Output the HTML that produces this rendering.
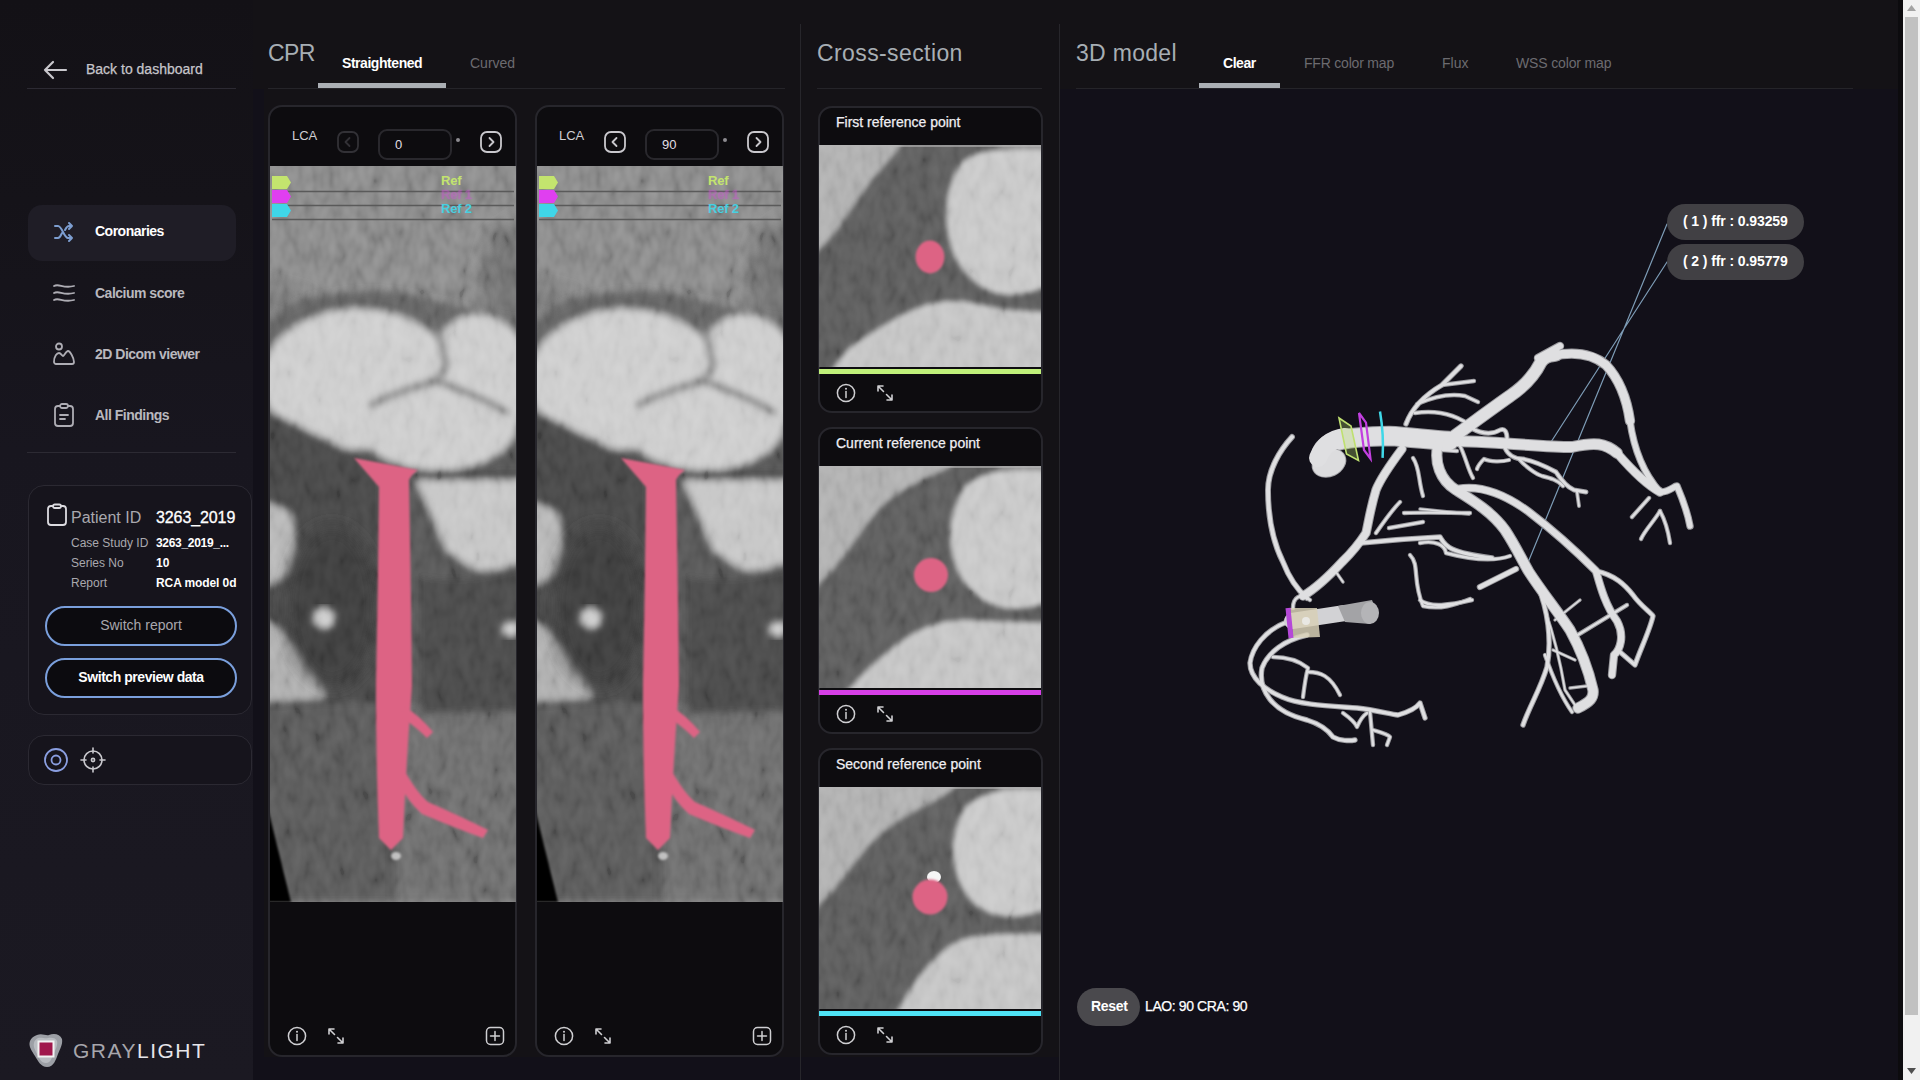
<!DOCTYPE html>
<html><head><meta charset="utf-8">
<style>
*{margin:0;padding:0;box-sizing:border-box}
html,body{width:1920px;height:1080px;overflow:hidden;background:#121019;font-family:"Liberation Sans",sans-serif;color:#fff}
.a{position:absolute}
.t{position:absolute;white-space:nowrap;line-height:1}
#side{left:0;top:0;width:253px;height:1080px;background:linear-gradient(180deg,#131116 0,#151319 200px,#18161f 450px,#1b1922 100%)}
.hl{position:absolute;height:1px;background:#2c2a33}
.navt{font-size:14px;font-weight:bold;color:#b9b8be;letter-spacing:-0.5px}
.card{position:absolute;border:1.5px solid #2b2932;border-radius:16px;background:#16141c}
.btn{position:absolute;border:2px solid #7a9fdc;border-radius:20px;background:#0c0b0f;font-size:14px;text-align:center;line-height:35px}
.title{font-size:23px;color:#a7aeb4}
.tab{font-size:14px;color:#6c6b70}
.tabon{font-size:14px;color:#fff;font-weight:bold;letter-spacing:-0.45px}
.ul{position:absolute;height:5px;background:#abafb4}
.panel{position:absolute;border:2px solid #27262c;border-radius:14px;background:#0d0c0f;overflow:hidden}
.vsep{position:absolute;width:1px;background:#27262b}
#scroll{left:1903px;top:0;width:17px;height:1080px;background:#f1f1f1}
svg{position:absolute;overflow:visible}
</style></head><body>
<div class="a" style="left:253px;top:0;width:1650px;height:89px;background:#141216"></div>
<div class="a" style="left:264px;top:0;width:796px;height:1057px;background:#141216"></div>
<div id="side" class="a"></div>

<!-- ===== SIDEBAR ===== -->
<svg style="left:42px;top:60px" width="26" height="20" viewBox="0 0 26 20"><path d="M24 10H3M11 2L3 10L11 18" fill="none" stroke="#c9c8cd" stroke-width="2.2" stroke-linecap="round" stroke-linejoin="round"/></svg>
<div class="t" style="left:86px;top:62px;font-size:14px;color:#c6c5ca;-webkit-text-stroke:0.25px #c6c5ca">Back to dashboard</div>
<div class="hl" style="left:27px;top:88px;width:209px"></div>

<div class="a" style="left:28px;top:205px;width:208px;height:56px;border-radius:14px;background:#1f1d26"></div>
<svg style="left:53px;top:222px" width="22" height="20" viewBox="0 0 22 20"><g fill="none" stroke="#7d9ed0" stroke-width="2" stroke-linecap="round" stroke-linejoin="round"><path d="M2 4h3c4 0 6 12 10 12h4M2 16h3c2 0 3-3 4-5M12 8c1-2 2-4 4-4h3M16 1l3 3-3 3M16 13l3 3-3 3"/></g></svg>
<div class="t navt" style="left:95px;top:224px;color:#fff">Coronaries</div>

<svg style="left:52px;top:282px" width="24" height="22" viewBox="0 0 24 22"><g fill="none" stroke="#aeadb4" stroke-width="1.8" stroke-linecap="round"><path d="M2 4c5-3 9 3 20 0M2 11c5-3 9 3 20 0M2 18c5-3 9 3 20 0"/></g></svg>
<div class="t navt" style="left:95px;top:286px">Calcium score</div>

<svg style="left:52px;top:342px" width="24" height="24" viewBox="0 0 24 24"><g fill="none" stroke="#aeadb4" stroke-width="1.8" stroke-linejoin="round"><circle cx="7" cy="4.5" r="3"/><path d="M2 20c0-6 3-9 5-9s3 3 4 3 3-5 5-5 6 7 6 11c0 1-1 2-2 2H4c-1 0-2-1-2-2z"/></g></svg>
<div class="t navt" style="left:95px;top:347px">2D Dicom viewer</div>

<svg style="left:53px;top:403px" width="22" height="24" viewBox="0 0 22 24"><g fill="none" stroke="#aeadb4" stroke-width="1.8" stroke-linecap="round" stroke-linejoin="round"><path d="M7 3H5C3 3 2 4 2 6v14c0 2 1 3 3 3h12c2 0 3-1 3-3V6c0-2-1-3-3-3h-2"/><rect x="7" y="1" width="8" height="4" rx="2"/><path d="M7 12h8M7 16h5"/></g></svg>
<div class="t navt" style="left:95px;top:408px">All Findings</div>
<div class="hl" style="left:27px;top:452px;width:209px"></div>

<!-- patient card -->
<div class="card" style="left:28px;top:485px;width:224px;height:230px"></div>
<svg style="left:46px;top:503px" width="22" height="24" viewBox="0 0 22 24"><g fill="none" stroke="#dcdbe0" stroke-width="1.8" stroke-linejoin="round"><path d="M7 3H5C3 3 2 4 2 6v13c0 2 1 3 3 3h12c2 0 3-1 3-3V6c0-2-1-3-3-3h-2"/><rect x="7" y="1.5" width="8" height="3.5" rx="1.7"/></g></svg>
<div class="t" style="left:71px;top:510px;font-size:16px;color:#a9a8ae">Patient ID</div>
<div class="t" style="left:156px;top:510px;font-size:16px;color:#fff;letter-spacing:-0.1px;-webkit-text-stroke:0.3px #fff">3263_2019</div>
<div class="t" style="left:71px;top:537px;font-size:12px;color:#a9a8ae">Case Study ID</div>
<div class="t" style="left:156px;top:537px;font-size:12px;color:#fff;font-weight:bold;letter-spacing:-0.3px">3263_2019_...</div>
<div class="t" style="left:71px;top:557px;font-size:12px;color:#a9a8ae">Series No</div>
<div class="t" style="left:156px;top:557px;font-size:12px;color:#fff;font-weight:bold">10</div>
<div class="t" style="left:71px;top:577px;font-size:12px;color:#a9a8ae">Report</div>
<div class="t" style="left:156px;top:577px;font-size:12px;color:#fff;font-weight:bold;letter-spacing:-0.1px">RCA model 0d</div>
<div class="btn" style="left:45px;top:606px;width:192px;height:40px;color:#a8a7ad">Switch report</div>
<div class="btn" style="left:45px;top:658px;width:192px;height:40px;color:#fff;font-weight:bold;letter-spacing:-0.45px">Switch preview data</div>

<!-- tools card -->
<div class="card" style="left:28px;top:735px;width:224px;height:50px"></div>
<svg style="left:43px;top:747px" width="26" height="26" viewBox="0 0 26 26"><g fill="none" stroke="#8a9ee0" stroke-width="1.8"><circle cx="13" cy="13" r="11"/><circle cx="13" cy="13" r="4.5"/></g></svg>
<svg style="left:80px;top:747px" width="26" height="26" viewBox="0 0 26 26"><g fill="none" stroke="#c9c8cd" stroke-width="1.6" stroke-linecap="round"><circle cx="13" cy="13" r="9"/><circle cx="13" cy="13" r="1.6"/><path d="M13 1v5M13 20v5M1 13h5M20 13h5"/></g></svg>

<!-- logo -->
<svg style="left:29px;top:1033px" width="34" height="35" viewBox="0 0 34 35"><path d="M8 2c5-2 9 1 12 0 5-2 11-1 13 4 1 5-2 10-4 15-2 5-4 13-11 13-6 0-9-6-12-11C3 18-1 13 1 8c1-3 4-5 7-6z" fill="#9c9fa5"/><path d="M9 5c4-1 7 1 10 0 4-1 8 0 9 3s-1 8-3 12-3 10-8 10-7-5-9-9C6 17 4 13 5 10c0-2 2-4 4-5z" fill="#b9bcc1"/><rect x="8.5" y="7.5" width="17" height="17" fill="#f2f2f2"/><rect x="10.5" y="9.5" width="13" height="13" fill="#a0184c"/></svg>
<div class="t" style="left:73px;top:1040px;font-size:21px;color:#a7a6ac;letter-spacing:1.5px;font-weight:normal">GRAY<span style="color:#e6e5ea">LIGHT</span></div>

<!-- ===== MAIN SEPARATORS ===== -->
<div class="vsep" style="left:800px;top:24px;height:1056px"></div>
<div class="vsep" style="left:1059px;top:24px;height:1056px"></div>

<!-- CPR header -->
<div class="t title" style="left:268px;top:42px;letter-spacing:-0.6px">CPR</div>
<div class="t tabon" style="left:342px;top:56px">Straightened</div>
<div class="t tab" style="left:470px;top:56px">Curved</div>
<div class="hl" style="left:268px;top:88px;width:517px;background:#252429"></div>
<div class="ul" style="left:318px;top:83px;width:128px"></div>

<!-- Cross-section header -->
<div class="t title" style="left:817px;top:42px;letter-spacing:0.4px">Cross-section</div>
<div class="hl" style="left:817px;top:88px;width:225px;background:#252429"></div>

<!-- 3D header -->
<div class="t title" style="left:1076px;top:42px;letter-spacing:0.3px">3D model</div>
<div class="t tabon" style="left:1223px;top:56px">Clear</div>
<div class="t tab" style="left:1304px;top:56px;letter-spacing:-0.2px">FFR color map</div>
<div class="t tab" style="left:1442px;top:56px">Flux</div>
<div class="t tab" style="left:1516px;top:56px;letter-spacing:-0.15px">WSS color map</div>
<div class="hl" style="left:1076px;top:88px;width:777px;background:#252429"></div>
<div class="ul" style="left:1199px;top:83px;width:81px"></div>

<!-- PANELS placeholder -->
<svg width="0" height="0" style="position:absolute"><defs><filter id="ctnoise" x="0" y="0" width="100%" height="100%" filterUnits="objectBoundingBox"><feTurbulence type="fractalNoise" baseFrequency="0.09 0.05" numOctaves="2" seed="7" result="n"/><feColorMatrix type="matrix" values="1.6 0 0 0 -0.3  1.6 0 0 0 -0.3  1.6 0 0 0 -0.3  0 0 0 0 1" /></filter></defs></svg><div class="panel" style="left:268px;top:105px;width:249px;height:952px"></div><div class="t" style="left:292px;top:129px;font-size:13px;color:#cfced3">LCA</div><svg style="left:337px;top:131px" width="22" height="22" viewBox="0 0 22 22"><rect x="1" y="1" width="20" height="20" rx="6" fill="none" stroke="#323136" stroke-width="1.8"/><path d="M12.5 7l-4 4 4 4" fill="none" stroke="#323136" stroke-width="1.8" stroke-linecap="round" stroke-linejoin="round"/></svg><div class="a" style="left:378px;top:129px;width:74px;height:31px;border:2px solid #29282d;border-radius:9px"></div><div class="t" style="left:395px;top:138px;font-size:13px;color:#e0dfe4">0</div><div class="a" style="left:456px;top:138px;width:4px;height:4px;border-radius:2px;background:#8d8c91"></div><svg style="left:480px;top:131px" width="22" height="22" viewBox="0 0 22 22"><rect x="1" y="1" width="20" height="20" rx="6" fill="none" stroke="#c9c8cd" stroke-width="1.8"/><path d="M9.5 7l4 4-4 4" fill="none" stroke="#c9c8cd" stroke-width="1.8" stroke-linecap="round" stroke-linejoin="round"/></svg><svg style="left:270px;top:166px" width="246" height="736" viewBox="0 0 246 736">
<defs><filter id="blc0" x="-10%" y="-10%" width="120%" height="120%"><feGaussianBlur stdDeviation="3.5"/></filter>
<filter id="bmc0" x="-30%" y="-30%" width="160%" height="160%"><feGaussianBlur stdDeviation="8"/></filter>
<filter id="bsc0" x="-20%" y="-20%" width="140%" height="140%"><feGaussianBlur stdDeviation="0.8"/></filter>
<clipPath id="cpc0"><rect width="246" height="736"/></clipPath></defs>
<g clip-path="url(#cpc0)">
<rect width="246" height="736" fill="#858585"/>
<g filter="url(#bmc0)">
<path d="M222 70 L270 40 L270 170 L210 160 Q205 120 222 70z" fill="#6e6e6e"/>
<path d="M-20 115 L40 130 L30 175 L-20 190z" fill="#737373"/>
</g>
<g filter="url(#blc0)">
<path d="M-10 165 Q15 138 46 131 Q80 124 106 125 Q135 126 155 133 Q190 140 215 148 Q235 152 260 156 L260 175 L-10 200z" fill="#5e5e5e" />
<path d="M-10 240 L150 240 L150 736 L-10 736z" fill="#525252"/>
<path d="M140 270 L260 250 L260 736 L140 736z" fill="#555555"/>
<ellipse cx="88" cy="213" rx="96" ry="70" fill="#cccccc"/>
<ellipse cx="208" cy="215" rx="52" ry="67" fill="#cbcbcb"/>
<ellipse cx="168" cy="260" rx="78" ry="44" fill="#cbcbcb"/>
<path d="M157 138 Q172 170 176 198 Q172 208 166 215 M166 215 Q130 224 99 240 M166 215 Q205 228 239 247" fill="none" stroke="#6a6a6a" stroke-width="6"/>
<path d="M-10 300 Q50 306 100 318 L100 330 Q50 322 -10 324z" fill="#3a3a3a"/>
<path d="M148 305 L260 306 L260 314 L150 314z" fill="#444"/>
<path d="M146 314 L260 314 L260 392 Q230 406 205 404 Q185 390 176 383 Q160 345 146 314z" fill="#c4c4c4"/>
<path d="M-10 240 L110 300 L110 545 L-10 545z" fill="#474747"/>
<path d="M-10 336 Q10 338 22 350 Q28 380 20 405 Q10 418 -10 420z" fill="#b4b4b4"/>
<path d="M-10 452 Q15 462 35 490 Q52 515 55 532 L-10 536z" fill="#ababab"/>
<path d="M125 540 L260 525 L260 736 L125 736z" fill="#6a6a6a"/>
<path d="M-10 540 L118 535 L118 736 L-10 736z" fill="#585858"/>
<path d="M150 410 Q200 420 260 400 L260 545 L150 548z" fill="#4a4a4a"/>
</g>
<g filter="url(#bmc0)">
<ellipse cx="62" cy="440" rx="46" ry="80" fill="#3d3d3d"/>
</g>
<g filter="url(#blc0)">
<circle cx="54" cy="452" r="11" fill="#d0d0d0"/>
<ellipse cx="241" cy="463" rx="9" ry="8" fill="#cdcdcd"/>
</g>
<rect width="246" height="736" filter="url(#ctnoise)" opacity=".16" style="mix-blend-mode:overlay"/>
<g stroke="#5a5a5a" stroke-width="1.3" fill="none"><path d="M2 25.5H244M2 39.5H244M2 53.5H244"/></g>
<path d="M-2 643 L21 736 L-2 736z" fill="#050505" filter="url(#bsc0)"/>
<g fill="#dd6384" filter="url(#bsc0)">
<path d="M84 292 L148 304 Q142 308 139 314 Q141 420 142 520 Q136 600 133 672 L121 684 L109 672 Q106 600 106 520 Q108 420 109 321z"/>
<path d="M134 540 Q150 550 163 566 L157 572 Q145 560 131 551z"/>
<path d="M131 598 Q145 625 158 636 Q190 650 218 664 L213 672 Q185 662 152 648 Q137 635 126 612z"/>
</g>
<ellipse cx="126" cy="690" rx="5" ry="4" fill="#e8e8e8" opacity=".7" filter="url(#bsc0)"/>
</g></svg><svg style="left:272px;top:176px" width="20" height="13" viewBox="0 0 20 13"><path d="M0 0H15L19 6.5L15 13H0z" fill="#c3e46e"/></svg><svg style="left:272px;top:190px" width="20" height="13" viewBox="0 0 20 13"><path d="M0 0H15L19 6.5L15 13H0z" fill="#e03ff0"/></svg><svg style="left:272px;top:204px" width="20" height="13" viewBox="0 0 20 13"><path d="M0 0H15L19 6.5L15 13H0z" fill="#3fd6e8"/></svg><div class="t" style="left:441px;top:174px;font-size:13px;font-weight:bold;letter-spacing:-0.2px;color:#c3e46e">Ref</div><div class="t" style="left:441px;top:188px;font-size:13px;font-weight:bold;letter-spacing:-0.2px;color:#cf52d6;opacity:.45;text-shadow:0 0 2px #d040e0">Ref 1</div><div class="t" style="left:441px;top:202px;font-size:13px;font-weight:bold;letter-spacing:-0.2px;color:#48cfe0">Ref 2</div><svg style="left:287px;top:1026px" width="20" height="20" viewBox="0 0 20 20"><g fill="none" stroke="#cfcfd2" stroke-width="1.5" stroke-linecap="round"><circle cx="10" cy="10" r="8.6"/><path d="M10 8.5v6"/></g><circle cx="10" cy="5.8" r="1" fill="#cfcfd2"/></svg><svg style="left:327px;top:1027px" width="18" height="18" viewBox="0 0 18 18"><g fill="none" stroke="#cfcfd2" stroke-width="1.6" stroke-linecap="round" stroke-linejoin="round"><path d="M2 2l5.5 5.5M2 7V2h5M16 16l-5.5-5.5M16 11v5h-5"/></g></svg><svg style="left:485px;top:1026px" width="20" height="20" viewBox="0 0 20 20"><g fill="none" stroke="#cfcfd2" stroke-width="1.5" stroke-linecap="round"><rect x="1.5" y="1.5" width="17" height="17" rx="4"/><path d="M10 5.5v9M5.5 10h9"/></g></svg><div class="panel" style="left:535px;top:105px;width:249px;height:952px"></div><div class="t" style="left:559px;top:129px;font-size:13px;color:#cfced3">LCA</div><svg style="left:604px;top:131px" width="22" height="22" viewBox="0 0 22 22"><rect x="1" y="1" width="20" height="20" rx="6" fill="none" stroke="#c9c8cd" stroke-width="1.8"/><path d="M12.5 7l-4 4 4 4" fill="none" stroke="#c9c8cd" stroke-width="1.8" stroke-linecap="round" stroke-linejoin="round"/></svg><div class="a" style="left:645px;top:129px;width:74px;height:31px;border:2px solid #29282d;border-radius:9px"></div><div class="t" style="left:662px;top:138px;font-size:13px;color:#e0dfe4">90</div><div class="a" style="left:723px;top:138px;width:4px;height:4px;border-radius:2px;background:#8d8c91"></div><svg style="left:747px;top:131px" width="22" height="22" viewBox="0 0 22 22"><rect x="1" y="1" width="20" height="20" rx="6" fill="none" stroke="#c9c8cd" stroke-width="1.8"/><path d="M9.5 7l4 4-4 4" fill="none" stroke="#c9c8cd" stroke-width="1.8" stroke-linecap="round" stroke-linejoin="round"/></svg><svg style="left:537px;top:166px" width="246" height="736" viewBox="0 0 246 736">
<defs><filter id="blc267" x="-10%" y="-10%" width="120%" height="120%"><feGaussianBlur stdDeviation="3.5"/></filter>
<filter id="bmc267" x="-30%" y="-30%" width="160%" height="160%"><feGaussianBlur stdDeviation="8"/></filter>
<filter id="bsc267" x="-20%" y="-20%" width="140%" height="140%"><feGaussianBlur stdDeviation="0.8"/></filter>
<clipPath id="cpc267"><rect width="246" height="736"/></clipPath></defs>
<g clip-path="url(#cpc267)">
<rect width="246" height="736" fill="#858585"/>
<g filter="url(#bmc267)">
<path d="M222 70 L270 40 L270 170 L210 160 Q205 120 222 70z" fill="#6e6e6e"/>
<path d="M-20 115 L40 130 L30 175 L-20 190z" fill="#737373"/>
</g>
<g filter="url(#blc267)">
<path d="M-10 165 Q15 138 46 131 Q80 124 106 125 Q135 126 155 133 Q190 140 215 148 Q235 152 260 156 L260 175 L-10 200z" fill="#5e5e5e" />
<path d="M-10 240 L150 240 L150 736 L-10 736z" fill="#525252"/>
<path d="M140 270 L260 250 L260 736 L140 736z" fill="#555555"/>
<ellipse cx="88" cy="213" rx="96" ry="70" fill="#cccccc"/>
<ellipse cx="208" cy="215" rx="52" ry="67" fill="#cbcbcb"/>
<ellipse cx="168" cy="260" rx="78" ry="44" fill="#cbcbcb"/>
<path d="M157 138 Q172 170 176 198 Q172 208 166 215 M166 215 Q130 224 99 240 M166 215 Q205 228 239 247" fill="none" stroke="#6a6a6a" stroke-width="6"/>
<path d="M-10 300 Q50 306 100 318 L100 330 Q50 322 -10 324z" fill="#3a3a3a"/>
<path d="M148 305 L260 306 L260 314 L150 314z" fill="#444"/>
<path d="M146 314 L260 314 L260 392 Q230 406 205 404 Q185 390 176 383 Q160 345 146 314z" fill="#c4c4c4"/>
<path d="M-10 240 L110 300 L110 545 L-10 545z" fill="#474747"/>
<path d="M-10 336 Q10 338 22 350 Q28 380 20 405 Q10 418 -10 420z" fill="#b4b4b4"/>
<path d="M-10 452 Q15 462 35 490 Q52 515 55 532 L-10 536z" fill="#ababab"/>
<path d="M125 540 L260 525 L260 736 L125 736z" fill="#6a6a6a"/>
<path d="M-10 540 L118 535 L118 736 L-10 736z" fill="#585858"/>
<path d="M150 410 Q200 420 260 400 L260 545 L150 548z" fill="#4a4a4a"/>
</g>
<g filter="url(#bmc267)">
<ellipse cx="62" cy="440" rx="46" ry="80" fill="#3d3d3d"/>
</g>
<g filter="url(#blc267)">
<circle cx="54" cy="452" r="11" fill="#d0d0d0"/>
<ellipse cx="241" cy="463" rx="9" ry="8" fill="#cdcdcd"/>
</g>
<rect width="246" height="736" filter="url(#ctnoise)" opacity=".16" style="mix-blend-mode:overlay"/>
<g stroke="#5a5a5a" stroke-width="1.3" fill="none"><path d="M2 25.5H244M2 39.5H244M2 53.5H244"/></g>
<path d="M-2 643 L21 736 L-2 736z" fill="#050505" filter="url(#bsc267)"/>
<g fill="#dd6384" filter="url(#bsc267)">
<path d="M84 292 L148 304 Q142 308 139 314 Q141 420 142 520 Q136 600 133 672 L121 684 L109 672 Q106 600 106 520 Q108 420 109 321z"/>
<path d="M134 540 Q150 550 163 566 L157 572 Q145 560 131 551z"/>
<path d="M131 598 Q145 625 158 636 Q190 650 218 664 L213 672 Q185 662 152 648 Q137 635 126 612z"/>
</g>
<ellipse cx="126" cy="690" rx="5" ry="4" fill="#e8e8e8" opacity=".7" filter="url(#bsc267)"/>
</g></svg><svg style="left:539px;top:176px" width="20" height="13" viewBox="0 0 20 13"><path d="M0 0H15L19 6.5L15 13H0z" fill="#c3e46e"/></svg><svg style="left:539px;top:190px" width="20" height="13" viewBox="0 0 20 13"><path d="M0 0H15L19 6.5L15 13H0z" fill="#e03ff0"/></svg><svg style="left:539px;top:204px" width="20" height="13" viewBox="0 0 20 13"><path d="M0 0H15L19 6.5L15 13H0z" fill="#3fd6e8"/></svg><div class="t" style="left:708px;top:174px;font-size:13px;font-weight:bold;letter-spacing:-0.2px;color:#c3e46e">Ref</div><div class="t" style="left:708px;top:188px;font-size:13px;font-weight:bold;letter-spacing:-0.2px;color:#cf52d6;opacity:.45;text-shadow:0 0 2px #d040e0">Ref 1</div><div class="t" style="left:708px;top:202px;font-size:13px;font-weight:bold;letter-spacing:-0.2px;color:#48cfe0">Ref 2</div><svg style="left:554px;top:1026px" width="20" height="20" viewBox="0 0 20 20"><g fill="none" stroke="#cfcfd2" stroke-width="1.5" stroke-linecap="round"><circle cx="10" cy="10" r="8.6"/><path d="M10 8.5v6"/></g><circle cx="10" cy="5.8" r="1" fill="#cfcfd2"/></svg><svg style="left:594px;top:1027px" width="18" height="18" viewBox="0 0 18 18"><g fill="none" stroke="#cfcfd2" stroke-width="1.6" stroke-linecap="round" stroke-linejoin="round"><path d="M2 2l5.5 5.5M2 7V2h5M16 16l-5.5-5.5M16 11v5h-5"/></g></svg><svg style="left:752px;top:1026px" width="20" height="20" viewBox="0 0 20 20"><g fill="none" stroke="#cfcfd2" stroke-width="1.5" stroke-linecap="round"><rect x="1.5" y="1.5" width="17" height="17" rx="4"/><path d="M10 5.5v9M5.5 10h9"/></g></svg>
<!--CPR2-->
<div class="panel" style="left:818px;top:106px;width:225px;height:307px;border-radius:14px"></div><div class="t" style="left:836px;top:115px;font-size:14px;color:#f0eff3;-webkit-text-stroke:0.25px #f0eff3">First reference point</div><svg style="left:819px;top:145px" width="222" height="222" viewBox="0 0 222 222">
<defs><filter id="xbx0" x="-10%" y="-10%" width="120%" height="120%"><feGaussianBlur stdDeviation="2.8"/></filter>
<filter id="xsx0"><feGaussianBlur stdDeviation="0.8"/></filter><clipPath id="xcx0"><rect width="222" height="222"/></clipPath></defs>
<g clip-path="url(#xcx0)">
<rect width="222" height="222" fill="#5a5a5a"/>
<g filter="url(#xbx0)">
<path d="M150 -10 L232 -10 L232 40 Q200 0 150 -10z" fill="#8a8a8a"/>
<path d="M-8 -8 L88 -8 Q75 10 62 25 Q50 38 41 51 Q30 68 20 82 Q10 96 -8 112z" fill="#acacac"/>
<path d="M232 5 L178 5 Q155 6 142 18 Q127 40 127 70 C127 110 150 148 190 150 C205 150 222 145 232 140z" fill="#c6c6c6"/>
<path d="M8 232 Q25 205 41 195 Q60 182 82 170 Q98 162 113 158 Q130 155 144 156 Q165 160 185 164 Q205 166 232 167 L232 232z" fill="#c2c2c2"/>
</g>
<rect width="222" height="222" filter="url(#ctnoise)" opacity=".16" style="mix-blend-mode:overlay"/>
<rect x="0" y="0" width="222" height="2" fill="#b5b5b5" opacity=".6"/>

<ellipse cx="111" cy="112" rx="14.4" ry="16.4" fill="#dd6384" filter="url(#xsx0)"/>
</g></svg><div class="a" style="left:819px;top:369px;width:222px;height:5px;background:#c0f07a"></div><svg style="left:836px;top:383px" width="20" height="20" viewBox="0 0 20 20"><g fill="none" stroke="#cfcfd2" stroke-width="1.5" stroke-linecap="round"><circle cx="10" cy="10" r="8.6"/><path d="M10 8.5v6"/></g><circle cx="10" cy="5.8" r="1" fill="#cfcfd2"/></svg><svg style="left:876px;top:384px" width="18" height="18" viewBox="0 0 18 18"><g fill="none" stroke="#cfcfd2" stroke-width="1.6" stroke-linecap="round" stroke-linejoin="round"><path d="M2 2l5.5 5.5M2 7V2h5M16 16l-5.5-5.5M16 11v5h-5"/></g></svg><div class="panel" style="left:818px;top:427px;width:225px;height:307px;border-radius:14px"></div><div class="t" style="left:836px;top:436px;font-size:14px;color:#f0eff3;-webkit-text-stroke:0.25px #f0eff3">Current reference point</div><svg style="left:819px;top:466px" width="222" height="222" viewBox="0 0 222 222">
<defs><filter id="xbx1" x="-10%" y="-10%" width="120%" height="120%"><feGaussianBlur stdDeviation="2.8"/></filter>
<filter id="xsx1"><feGaussianBlur stdDeviation="0.8"/></filter><clipPath id="xcx1"><rect width="222" height="222"/></clipPath></defs>
<g clip-path="url(#xcx1)">
<rect width="222" height="222" fill="#5a5a5a"/>
<g filter="url(#xbx1)">
<path d="M150 -10 L232 -10 L232 40 Q200 0 150 -10z" fill="#8a8a8a"/>
<path d="M-8 -8 L145 -8 Q125 5 103 14 Q80 25 62 41 Q45 60 31 82 Q15 105 -8 126z" fill="#acacac"/>
<path d="M232 5 L180 5 Q160 8 146 20 Q131 42 131 70 C131 110 158 142 195 143 C210 143 225 138 232 134z" fill="#c6c6c6"/>
<path d="M22 232 Q40 210 62 191 Q78 178 92 168 Q108 160 123 156 Q140 153 154 154 Q190 156 232 156 L232 232z" fill="#c2c2c2"/>
</g>
<rect width="222" height="222" filter="url(#ctnoise)" opacity=".16" style="mix-blend-mode:overlay"/>
<rect x="0" y="0" width="222" height="2" fill="#b5b5b5" opacity=".6"/>

<ellipse cx="112" cy="109" rx="17" ry="17" fill="#dd6384" filter="url(#xsx1)"/>
</g></svg><div class="a" style="left:819px;top:690px;width:222px;height:5px;background:#d63fe6"></div><svg style="left:836px;top:704px" width="20" height="20" viewBox="0 0 20 20"><g fill="none" stroke="#cfcfd2" stroke-width="1.5" stroke-linecap="round"><circle cx="10" cy="10" r="8.6"/><path d="M10 8.5v6"/></g><circle cx="10" cy="5.8" r="1" fill="#cfcfd2"/></svg><svg style="left:876px;top:705px" width="18" height="18" viewBox="0 0 18 18"><g fill="none" stroke="#cfcfd2" stroke-width="1.6" stroke-linecap="round" stroke-linejoin="round"><path d="M2 2l5.5 5.5M2 7V2h5M16 16l-5.5-5.5M16 11v5h-5"/></g></svg><div class="panel" style="left:818px;top:748px;width:225px;height:307px;border-radius:14px"></div><div class="t" style="left:836px;top:757px;font-size:14px;color:#f0eff3;-webkit-text-stroke:0.25px #f0eff3">Second reference point</div><svg style="left:819px;top:787px" width="222" height="222" viewBox="0 0 222 222">
<defs><filter id="xbx2" x="-10%" y="-10%" width="120%" height="120%"><feGaussianBlur stdDeviation="2.8"/></filter>
<filter id="xsx2"><feGaussianBlur stdDeviation="0.8"/></filter><clipPath id="xcx2"><rect width="222" height="222"/></clipPath></defs>
<g clip-path="url(#xcx2)">
<rect width="222" height="222" fill="#5a5a5a"/>
<g filter="url(#xbx2)">
<path d="M150 -10 L232 -10 L232 40 Q200 0 150 -10z" fill="#8a8a8a"/>
<path d="M-8 -8 L147 -8 Q125 10 103 21 Q80 32 62 47 Q45 62 31 82 Q15 105 -8 126z" fill="#acacac"/>
<path d="M232 3 L185 3 Q163 6 148 18 Q134 36 134 62 C134 100 155 128 188 130 C205 130 222 125 232 120z" fill="#c6c6c6"/>
<path d="M74 232 Q88 205 103 185 Q118 168 134 156 Q148 150 164 148 Q190 146 232 146 L232 232z" fill="#c2c2c2"/>
</g>
<rect width="222" height="222" filter="url(#ctnoise)" opacity=".16" style="mix-blend-mode:overlay"/>
<rect x="0" y="0" width="222" height="2" fill="#b5b5b5" opacity=".6"/>
<ellipse cx="115" cy="90" rx="7" ry="6" fill="#f6f6f6" filter="url(#xs{uid})"/>
<ellipse cx="111" cy="110" rx="17.5" ry="17.5" fill="#dd6384" filter="url(#xsx2)"/>
</g></svg><div class="a" style="left:819px;top:1011px;width:222px;height:5px;background:#4fe3f5"></div><svg style="left:836px;top:1025px" width="20" height="20" viewBox="0 0 20 20"><g fill="none" stroke="#cfcfd2" stroke-width="1.5" stroke-linecap="round"><circle cx="10" cy="10" r="8.6"/><path d="M10 8.5v6"/></g><circle cx="10" cy="5.8" r="1" fill="#cfcfd2"/></svg><svg style="left:876px;top:1026px" width="18" height="18" viewBox="0 0 18 18"><g fill="none" stroke="#cfcfd2" stroke-width="1.6" stroke-linecap="round" stroke-linejoin="round"><path d="M2 2l5.5 5.5M2 7V2h5M16 16l-5.5-5.5M16 11v5h-5"/></g></svg>
<svg style="left:0;top:0" width="1920" height="1080" viewBox="0 0 1920 1080"><g fill="none" stroke-linecap="round" stroke-linejoin="round"><path d="M1667 224 L1527 565 M1667 262 L1551 442" stroke="#7d9cb6" stroke-width="1.2"/><path d="M1322 452 C1328 440 1345 437 1389 436 C1410 437 1430 440 1449 441" stroke="#9c9ca0" stroke-width="20.40"/><path d="M1449 440 C1470 425 1490 410 1510 396 C1528 384 1536 372 1541 362 C1545 356 1550 356 1556 355" stroke="#9c9ca0" stroke-width="13.40"/><path d="M1552 356 C1570 352 1590 352 1606 365 C1620 380 1627 400 1630 421" stroke="#9c9ca0" stroke-width="10.40"/><path d="M1630 421 C1634 450 1645 475 1660 492 C1668 493 1676 485 1677 486 C1683 500 1688 515 1690 526" stroke="#9c9ca0" stroke-width="7.40"/><path d="M1538 358 L1560 346" stroke="#9c9ca0" stroke-width="8.40"/><path d="M1449 441 C1490 441 1540 447 1572 447 C1595 442 1605 443 1617 453" stroke="#9c9ca0" stroke-width="11.90"/><path d="M1617 453 C1630 468 1645 484 1660 492" stroke="#9c9ca0" stroke-width="9.40"/><path d="M1438 445 C1434 462 1440 480 1456 490 C1472 500 1492 512 1505 530 C1515 545 1522 560 1529 572 C1542 592 1558 612 1570 630 C1580 648 1588 668 1593 690 C1594 698 1590 702 1578 708" stroke="#9c9ca0" stroke-width="11.40"/><path d="M1545 610 C1552 630 1560 660 1565 690 L1575 705" stroke="#9c9ca0" stroke-width="3.40"/><path d="M1553 650 L1575 660" stroke="#9c9ca0" stroke-width="3.40"/><path d="M1570 688 L1587 686" stroke="#9c9ca0" stroke-width="3.40"/><path d="M1458 489 C1485 484 1510 498 1529 512 C1550 528 1575 550 1596 571 C1600 585 1605 605 1617 621 C1625 636 1620 650 1614 655 L1612 675" stroke="#9c9ca0" stroke-width="8.40"/><path d="M1596 571 C1615 575 1625 585 1633 595 C1640 605 1650 612 1653 616 C1650 630 1640 650 1635 665 L1620 652" stroke="#9c9ca0" stroke-width="5.40"/><path d="M1537 584 C1548 610 1552 640 1547 667 C1540 690 1530 705 1523 725" stroke="#9c9ca0" stroke-width="5.40"/><path d="M1576 636 L1627 605" stroke="#9c9ca0" stroke-width="4.40"/><path d="M1545 655 C1552 675 1560 695 1572 712" stroke="#9c9ca0" stroke-width="4.40"/><path d="M1555 620 L1580 600" stroke="#9c9ca0" stroke-width="3.40"/><path d="M1649 498 L1632 517" stroke="#9c9ca0" stroke-width="4.40"/><path d="M1660 511 C1655 520 1645 530 1641 539" stroke="#9c9ca0" stroke-width="4.40"/><path d="M1660 511 C1665 520 1668 530 1670 543" stroke="#9c9ca0" stroke-width="4.40"/><path d="M1402 449 C1390 465 1380 480 1376 490 C1370 510 1368 525 1366 533 C1355 550 1344 560 1342 562 C1330 575 1318 587 1303 596" stroke="#9c9ca0" stroke-width="9.40"/><path d="M1361 543 C1390 540 1420 538 1440 537 C1445 545 1446 552 1492 558" stroke="#9c9ca0" stroke-width="5.40"/><path d="M1410 555 C1420 565 1412 580 1423 606 C1440 610 1455 605 1470 599" stroke="#9c9ca0" stroke-width="4.40"/><path d="M1376 533 C1385 520 1392 510 1400 502" stroke="#9c9ca0" stroke-width="4.40"/><path d="M1389 528 L1423 522" stroke="#9c9ca0" stroke-width="4.40"/><path d="M1404 513 C1430 512 1450 513 1470 513" stroke="#9c9ca0" stroke-width="4.40"/><path d="M1336 572 L1343 582" stroke="#9c9ca0" stroke-width="3.40"/><path d="M1406 424 C1413 405 1430 392 1442 385 L1461 366" stroke="#9c9ca0" stroke-width="5.40"/><path d="M1442 385 L1474 381" stroke="#9c9ca0" stroke-width="4.40"/><path d="M1417 404 C1435 396 1450 393 1465 396 L1478 402" stroke="#9c9ca0" stroke-width="4.40"/><path d="M1415 413 C1435 410 1455 413 1474 428" stroke="#9c9ca0" stroke-width="4.40"/><path d="M1471 428 C1480 433 1490 436 1500 430 C1505 428 1507 432 1507 439" stroke="#9c9ca0" stroke-width="4.90"/><path d="M1505 448 C1508 455 1515 459 1523 459 C1535 461 1545 466 1556 472 C1560 478 1565 486 1574 490 L1586 492" stroke="#9c9ca0" stroke-width="4.90"/><path d="M1519 459 C1524 465 1535 474 1542 476 C1550 478 1558 480 1563 486" stroke="#9c9ca0" stroke-width="4.40"/><path d="M1577 492 L1579 506" stroke="#9c9ca0" stroke-width="3.90"/><path d="M1509 460 C1502 462 1490 462 1484 459 C1480 463 1478 466 1477 469" stroke="#9c9ca0" stroke-width="4.40"/><path d="M1443 450 L1457 451" stroke="#9c9ca0" stroke-width="4.40"/><path d="M1460 446 C1465 455 1468 470 1473 478" stroke="#9c9ca0" stroke-width="4.40"/><path d="M1413 458 C1420 468 1418 480 1423 496" stroke="#9c9ca0" stroke-width="4.40"/><path d="M1420 509 L1469 514" stroke="#9c9ca0" stroke-width="3.40"/><path d="M1420 543 C1435 540 1445 545 1446 553 C1465 558 1490 563 1510 556" stroke="#9c9ca0" stroke-width="4.40"/><path d="M1480 587 L1516 569" stroke="#9c9ca0" stroke-width="6.40"/><path d="M1420 600 C1430 608 1450 605 1472 600" stroke="#9c9ca0" stroke-width="4.40"/><path d="M1292 437 C1280 450 1268 470 1268 490 C1268 515 1272 540 1283 562 C1290 580 1300 592 1307 598" stroke="#9c9ca0" stroke-width="5.90"/><path d="M1293 608 C1293 598 1300 592 1310 600" stroke="#9c9ca0" stroke-width="4.40"/><path d="M1287 622 C1265 630 1252 648 1250 663 C1250 678 1265 690 1282 697 C1300 705 1330 706 1357 708 C1375 710 1390 714 1398 715 C1405 713 1415 710 1420 703 L1425 718" stroke="#9c9ca0" stroke-width="5.40"/><path d="M1307 635 C1285 640 1268 652 1262 668 C1258 690 1272 712 1307 720 C1320 724 1328 730 1333 737 C1340 741 1350 741 1355 740" stroke="#9c9ca0" stroke-width="5.40"/><path d="M1273 657 C1285 657 1298 660 1308 668 C1306 675 1305 681 1303 697" stroke="#9c9ca0" stroke-width="4.40"/><path d="M1308 672 C1320 672 1330 675 1340 695" stroke="#9c9ca0" stroke-width="4.40"/><path d="M1343 713 C1350 718 1355 722 1357 727 C1360 720 1364 715 1367 713" stroke="#9c9ca0" stroke-width="4.40"/><path d="M1370 712 L1373 745" stroke="#9c9ca0" stroke-width="4.40"/><path d="M1373 730 C1380 732 1388 734 1390 737 L1387 745" stroke="#9c9ca0" stroke-width="4.40"/><path d="M1322 452 C1328 440 1345 437 1389 436 C1410 437 1430 440 1449 441" stroke="#dfdfe1" stroke-width="18.40"/><path d="M1449 440 C1470 425 1490 410 1510 396 C1528 384 1536 372 1541 362 C1545 356 1550 356 1556 355" stroke="#dfdfe1" stroke-width="11.40"/><path d="M1552 356 C1570 352 1590 352 1606 365 C1620 380 1627 400 1630 421" stroke="#dfdfe1" stroke-width="8.40"/><path d="M1630 421 C1634 450 1645 475 1660 492 C1668 493 1676 485 1677 486 C1683 500 1688 515 1690 526" stroke="#dfdfe1" stroke-width="5.40"/><path d="M1538 358 L1560 346" stroke="#dfdfe1" stroke-width="6.40"/><path d="M1449 441 C1490 441 1540 447 1572 447 C1595 442 1605 443 1617 453" stroke="#dfdfe1" stroke-width="9.90"/><path d="M1617 453 C1630 468 1645 484 1660 492" stroke="#dfdfe1" stroke-width="7.40"/><path d="M1438 445 C1434 462 1440 480 1456 490 C1472 500 1492 512 1505 530 C1515 545 1522 560 1529 572 C1542 592 1558 612 1570 630 C1580 648 1588 668 1593 690 C1594 698 1590 702 1578 708" stroke="#dfdfe1" stroke-width="9.40"/><path d="M1545 610 C1552 630 1560 660 1565 690 L1575 705" stroke="#dfdfe1" stroke-width="1.60"/><path d="M1553 650 L1575 660" stroke="#dfdfe1" stroke-width="1.60"/><path d="M1570 688 L1587 686" stroke="#dfdfe1" stroke-width="1.60"/><path d="M1458 489 C1485 484 1510 498 1529 512 C1550 528 1575 550 1596 571 C1600 585 1605 605 1617 621 C1625 636 1620 650 1614 655 L1612 675" stroke="#dfdfe1" stroke-width="6.40"/><path d="M1596 571 C1615 575 1625 585 1633 595 C1640 605 1650 612 1653 616 C1650 630 1640 650 1635 665 L1620 652" stroke="#dfdfe1" stroke-width="3.40"/><path d="M1537 584 C1548 610 1552 640 1547 667 C1540 690 1530 705 1523 725" stroke="#dfdfe1" stroke-width="3.40"/><path d="M1576 636 L1627 605" stroke="#dfdfe1" stroke-width="2.40"/><path d="M1545 655 C1552 675 1560 695 1572 712" stroke="#dfdfe1" stroke-width="2.40"/><path d="M1555 620 L1580 600" stroke="#dfdfe1" stroke-width="1.60"/><path d="M1649 498 L1632 517" stroke="#dfdfe1" stroke-width="2.40"/><path d="M1660 511 C1655 520 1645 530 1641 539" stroke="#dfdfe1" stroke-width="2.40"/><path d="M1660 511 C1665 520 1668 530 1670 543" stroke="#dfdfe1" stroke-width="2.40"/><path d="M1402 449 C1390 465 1380 480 1376 490 C1370 510 1368 525 1366 533 C1355 550 1344 560 1342 562 C1330 575 1318 587 1303 596" stroke="#dfdfe1" stroke-width="7.40"/><path d="M1361 543 C1390 540 1420 538 1440 537 C1445 545 1446 552 1492 558" stroke="#dfdfe1" stroke-width="3.40"/><path d="M1410 555 C1420 565 1412 580 1423 606 C1440 610 1455 605 1470 599" stroke="#dfdfe1" stroke-width="2.40"/><path d="M1376 533 C1385 520 1392 510 1400 502" stroke="#dfdfe1" stroke-width="2.40"/><path d="M1389 528 L1423 522" stroke="#dfdfe1" stroke-width="2.40"/><path d="M1404 513 C1430 512 1450 513 1470 513" stroke="#dfdfe1" stroke-width="2.40"/><path d="M1336 572 L1343 582" stroke="#dfdfe1" stroke-width="1.60"/><path d="M1406 424 C1413 405 1430 392 1442 385 L1461 366" stroke="#dfdfe1" stroke-width="3.40"/><path d="M1442 385 L1474 381" stroke="#dfdfe1" stroke-width="2.40"/><path d="M1417 404 C1435 396 1450 393 1465 396 L1478 402" stroke="#dfdfe1" stroke-width="2.40"/><path d="M1415 413 C1435 410 1455 413 1474 428" stroke="#dfdfe1" stroke-width="2.40"/><path d="M1471 428 C1480 433 1490 436 1500 430 C1505 428 1507 432 1507 439" stroke="#dfdfe1" stroke-width="2.90"/><path d="M1505 448 C1508 455 1515 459 1523 459 C1535 461 1545 466 1556 472 C1560 478 1565 486 1574 490 L1586 492" stroke="#dfdfe1" stroke-width="2.90"/><path d="M1519 459 C1524 465 1535 474 1542 476 C1550 478 1558 480 1563 486" stroke="#dfdfe1" stroke-width="2.40"/><path d="M1577 492 L1579 506" stroke="#dfdfe1" stroke-width="1.90"/><path d="M1509 460 C1502 462 1490 462 1484 459 C1480 463 1478 466 1477 469" stroke="#dfdfe1" stroke-width="2.40"/><path d="M1443 450 L1457 451" stroke="#dfdfe1" stroke-width="2.40"/><path d="M1460 446 C1465 455 1468 470 1473 478" stroke="#dfdfe1" stroke-width="2.40"/><path d="M1413 458 C1420 468 1418 480 1423 496" stroke="#dfdfe1" stroke-width="2.40"/><path d="M1420 509 L1469 514" stroke="#dfdfe1" stroke-width="1.60"/><path d="M1420 543 C1435 540 1445 545 1446 553 C1465 558 1490 563 1510 556" stroke="#dfdfe1" stroke-width="2.40"/><path d="M1480 587 L1516 569" stroke="#dfdfe1" stroke-width="4.40"/><path d="M1420 600 C1430 608 1450 605 1472 600" stroke="#dfdfe1" stroke-width="2.40"/><path d="M1292 437 C1280 450 1268 470 1268 490 C1268 515 1272 540 1283 562 C1290 580 1300 592 1307 598" stroke="#dfdfe1" stroke-width="3.90"/><path d="M1293 608 C1293 598 1300 592 1310 600" stroke="#dfdfe1" stroke-width="2.40"/><path d="M1287 622 C1265 630 1252 648 1250 663 C1250 678 1265 690 1282 697 C1300 705 1330 706 1357 708 C1375 710 1390 714 1398 715 C1405 713 1415 710 1420 703 L1425 718" stroke="#dfdfe1" stroke-width="3.40"/><path d="M1307 635 C1285 640 1268 652 1262 668 C1258 690 1272 712 1307 720 C1320 724 1328 730 1333 737 C1340 741 1350 741 1355 740" stroke="#dfdfe1" stroke-width="3.40"/><path d="M1273 657 C1285 657 1298 660 1308 668 C1306 675 1305 681 1303 697" stroke="#dfdfe1" stroke-width="2.40"/><path d="M1308 672 C1320 672 1330 675 1340 695" stroke="#dfdfe1" stroke-width="2.40"/><path d="M1343 713 C1350 718 1355 722 1357 727 C1360 720 1364 715 1367 713" stroke="#dfdfe1" stroke-width="2.40"/><path d="M1370 712 L1373 745" stroke="#dfdfe1" stroke-width="2.40"/><path d="M1373 730 C1380 732 1388 734 1390 737 L1387 745" stroke="#dfdfe1" stroke-width="2.40"/></g><ellipse cx="1329" cy="463" rx="18" ry="14" fill="#a2a2a6" transform="rotate(-25 1329 463)"/><ellipse cx="1329" cy="463" rx="17" ry="13" fill="#dcdcde" transform="rotate(-25 1329 463)"/><path d="M1318 458 Q1325 440 1345 437" stroke="#dfdfe1" stroke-width="18" fill="none" stroke-linecap="round"/><path d="M1292 621 L1345 613" stroke="#d2d2d5" stroke-width="16" stroke-linecap="round" fill="none"/><path d="M1338 606 L1372 600 L1378 615 L1370 624 L1345 622z" fill="#a3a3a6"/><ellipse cx="1370" cy="613" rx="9" ry="11" fill="#b4b4b7"/><polygon points="1290,608 1317,608 1320,637 1293,638" fill="#d8d0b6" opacity=".85"/><path d="M1288 608 L1291 638" stroke="#b548d8" stroke-width="5"/><circle cx="1306" cy="621" r="4" fill="#eeeeee" opacity=".8"/><polygon points="1339,418 1351,426 1358.5,460.5 1346.5,454" fill="rgba(190,225,110,0.3)" stroke="#bfe070" stroke-width="1.6"/><polygon points="1359,413 1366,422.6 1370.5,458.7 1364,450" fill="none" stroke="#c23fe0" stroke-width="2.2"/><path d="M1380 411.5 Q1384 435 1382.6 457.8" stroke="#3fd8e8" stroke-width="2.5" fill="none"/></svg><div class="a" style="left:1667px;top:204px;width:137px;height:36px;border-radius:18px;background:#414044"></div><div class="t" style="left:1683px;top:214px;font-size:14px;font-weight:bold;color:#fff;letter-spacing:-0.1px">( 1 ) ffr : 0.93259</div><div class="a" style="left:1667px;top:244px;width:137px;height:36px;border-radius:18px;background:#414044"></div><div class="t" style="left:1683px;top:254px;font-size:14px;font-weight:bold;color:#fff;letter-spacing:-0.1px">( 2 ) ffr : 0.95779</div><div class="a" style="left:1077px;top:988px;width:63px;height:38px;border-radius:19px;background:#4a494d"></div><div class="t" style="left:1091px;top:999px;font-size:14px;font-weight:bold;color:#fff;letter-spacing:-0.3px">Reset</div><div class="t" style="left:1145px;top:999px;font-size:14px;color:#fff;letter-spacing:-0.4px;-webkit-text-stroke:0.25px #fff">LAO: 90 CRA: 90</div>

<div class="a" style="left:1898px;top:0;width:5px;height:1080px;background:#0c0b0e"></div>
<!-- scrollbar -->
<div id="scroll" class="a">
  <div class="a" style="left:2px;top:17px;width:13px;height:998px;background:#c1c1c1"></div>
  <svg style="left:4px;top:5px" width="9" height="6" viewBox="0 0 9 6"><path d="M0 6L4.5 0L9 6z" fill="#a3a3a3"/></svg>
  <svg style="left:4px;top:1068px" width="9" height="6" viewBox="0 0 9 6"><path d="M0 0L4.5 6L9 0z" fill="#505050"/></svg>
</div>
</body></html>
